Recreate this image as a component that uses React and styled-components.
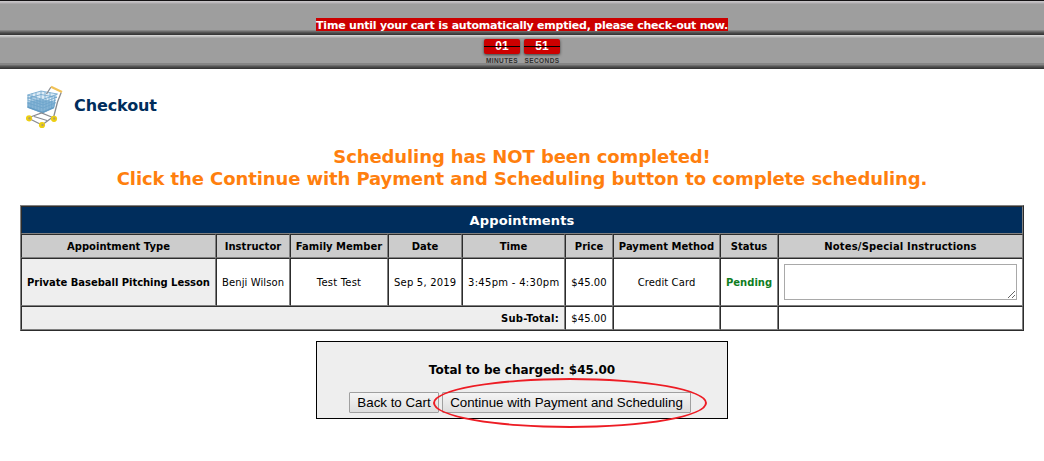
import React from "react";
import styled, { createGlobalStyle, css } from "styled-components";

const columns = [
  { title: "Appointment Type", width: 195 },
  { title: "Instructor", width: 74, spacing: 0.05 },
  { title: "Family Member", width: 98 },
  { title: "Date", width: 74 },
  { title: "Time", width: 103 },
  { title: "Price", width: 48 },
  { title: "Payment Method", width: 107 },
  { title: "Status", width: 58 },
  { title: "Notes/Special Instructions", width: 245, spacing: 0.16 },
];

const appointments = [
  {
    type: "Private Baseball Pitching Lesson",
    instructor: "Benji Wilson",
    member: "Test Test",
    date: "Sep 5, 2019",
    time: "3:45pm - 4:30pm",
    price: "$45.00",
    method: "Credit Card",
    status: "Pending",
  },
];

const CartIcon = () => (
  <svg width="38" height="44" viewBox="0 0 38 44" fill="none">
    {/* basket */}
    <path d="M1.500 10 L15 6 L31.500 9 L28 22.500 L16.500 27.500 L1.500 22 Z" fill="#dcebf6" />
    <path d="M1.500 17 L14 14 L30 17 L28 22.500 L16.500 28.500 L1.500 22.500 Z" fill="#86b5d6" />
    <path
      d="M1.500 10 L17 14.500 L31.500 9 M1.500 12.500 L17 17.500 L31 12 M1.500 15 L17 20 L30 15 M1.500 18 L17 23 L29 18 M1.500 10 L15 6 L31.500 9 M1.500 13.500 L15 9.500 L31 12.500"
      stroke="#6ca3ca"
      strokeWidth="0.8"
    />
    <path
      d="M2 10 V22 M5 11 V23.500 M8 12 V24.500 M11 13 V26 M14 14 V27 M17 14.500 V28 M20 13.500 V26.500 M23 12.500 V25 M26 11 L25.500 23.500 M29 10 L28 22.500 M6 8.500 V16 M10 7.500 V15 M15 6 V14 M19 7 V14 M24 7.500 V13"
      stroke="#6ca3ca"
      strokeWidth="0.8"
    />
    <path d="M1.500 22 L16.500 27.500 L28 22.500" stroke="#659dc5" strokeWidth="1.600" />
    {/* frame */}
    <path
      d="M20.500 9 L25 2 M35.200 7.500 L31.500 17 L27.500 32.500 M3 32.500 L15.500 28 L28 33 M3 33.500 L16 40 M16 40 L27.500 31.500 M8 31.500 L21 35.500"
      stroke="#888b91"
      strokeWidth="1.300"
    />
    <path d="M25 1.800 L36 7" stroke="#f1c257" strokeWidth="2.200" />
    <g fill="#edcf12">
      <circle cx="3" cy="33.300" r="3.100" />
      <circle cx="16" cy="40" r="3.100" />
      <circle cx="28" cy="33.800" r="3.100" />
    </g>
    <g fill="#b3a264">
      <circle cx="3.500" cy="33.300" r="1.200" />
      <circle cx="16.500" cy="40" r="1.200" />
      <circle cx="28.300" cy="33.500" r="1.200" />
    </g>
  </svg>
);

const App = () => {
  return (
    <Page>
      <GlobalStyle />
      <TopBar>
        <Warning>
          Time until your cart is automatically emptied, please check-out now.
        </Warning>
      </TopBar>
      <TimerBar>
        <Timer value="01" label="MINUTES" />
        <Timer value="51" label="SECONDS" />
      </TimerBar>
      <TitleRow>
        <CartIcon />
        <Title>Checkout</Title>
      </TitleRow>
      <Notice>
        <NoticeLine>Scheduling has NOT been completed!</NoticeLine>
        <NoticeLine>
          Click the Continue with Payment and Scheduling button to complete scheduling.
        </NoticeLine>
      </Notice>
      <Table>
        <colgroup>
          {columns.map((column) => (
            <Column key={column.title} $width={column.width} />
          ))}
        </colgroup>
        <tbody>
          <Row $height={28}>
            <Caption colSpan={9}>Appointments</Caption>
          </Row>
          <Row $height={24}>
            {columns.map((column) => (
              <HeadCell key={column.title} $spacing={column.spacing}>
                {column.title}
              </HeadCell>
            ))}
          </Row>
          {appointments.map((item) => (
            <Row key={item.type} $height={48}>
              <Cell $bold $shaded $spacing={-0.04}>{item.type}</Cell>
              <Cell $spacing={0.1}>{item.instructor}</Cell>
              <Cell $spacing={0.2}>{item.member}</Cell>
              <Cell $spacing={0.2}>{item.date}</Cell>
              <Cell $spacing={0.3}>{item.time}</Cell>
              <Cell $spacing={0.1}>{item.price}</Cell>
              <Cell $spacing={0.1}>{item.method}</Cell>
              <Cell $bold $color="#0f7d1e">{item.status}</Cell>
              <Cell>
                <Notes />
              </Cell>
            </Row>
          ))}
          <Row $height={24}>
            <Cell colSpan={5} $bold $shaded $align="right" $spacing={0.25}>
              Sub-Total:
            </Cell>
            <Cell $spacing={0.1}>$45.00</Cell>
            <Cell />
            <Cell />
            <Cell />
          </Row>
        </tbody>
      </Table>
      <TotalBox>
        <Total>Total to be charged: $45.00</Total>
        <Buttons>
          <Button $width={90}>Back to Cart</Button>
          <Button $width={249}>Continue with Payment and Scheduling</Button>
        </Buttons>
        <Highlight />
      </TotalBox>
    </Page>
  );
};

const Timer = ({ value, label }) => (
  <TimerBlock>
    <Digits>{value}</Digits>
    <TimerLabel>{label}</TimerLabel>
  </TimerBlock>
);

export default App;

const GlobalStyle = createGlobalStyle`
  * {
    box-sizing: border-box;
  }

  body {
    margin: 0;
    background: #ffffff;
    color: #000000;
    font-family: Verdana, "DejaVu Sans", sans-serif;
  }
`;

const Page = styled.div`
  height: 461px;
  overflow: hidden;
`;

const TopBar = styled.div`
  display: flex;
  justify-content: center;
  height: 35px;
  padding-top: 18px;
  background: linear-gradient(
    #141214 0 1px, #c5c3c5 1px 2px, #bcb9bc 2px 3px, #aaa8aa 3px 4px,
    #9e9e9e 4px 30px, #858585 30px 31px, #6c6c6c 31px 32px,
    #555555 32px 33px, #444444 33px 34px, #373737 34px 35px
  );
`;

const Warning = styled.div`
  width: 412px;
  height: 13px;
  background: #cc0000;
  color: #ffffff;
  font-size: 11px;
  font-weight: bold;
  letter-spacing: -0.215px;
  line-height: 15px;
  text-align: center;
  white-space: nowrap;
`;

const TimerBar = styled.div`
  display: flex;
  justify-content: center;
  gap: 4px;
  height: 34px;
  padding-top: 4px;
  background: linear-gradient(
    #d2d2d2 0 1px, #c0c0c0 1px 2px, #adadad 2px 3px,
    #9e9e9e 3px 28px, #858585 28px 30px, #6c6c6c 30px 31px,
    #555555 31px 32px, #444444 32px 33px, #373737 33px 34px
  );
`;

const TimerBlock = styled.div`
  display: flex;
  flex-direction: column;
  align-items: center;
  width: 36px;
`;

const Digits = styled.div`
  position: relative;
  width: 36px;
  height: 15px;
  border-radius: 2px;
  background: #cc0000;
  box-shadow: 0 1px 3px rgba(0, 0, 0, 0.6);
  color: #ffffff;
  font: bold 12px/14px "Liberation Sans", Arial, sans-serif;
  text-align: center;

  &::after {
    content: "";
    position: absolute;
    top: 7px;
    left: 0;
    width: 100%;
    height: 1px;
    background: #000000;
  }
`;

const TimerLabel = styled.div`
  margin-top: 3px;
  color: #303030;
  font: bold 6.5px/8px "Liberation Sans", Arial, sans-serif;
  letter-spacing: 0.4px;
`;

const TitleRow = styled.div`
  display: flex;
  gap: 10px;
  height: 77px;
  padding: 16px 0 0 26px;
`;

const Title = styled.h1`
  margin: 11px 0 0;
  color: #002d5c;
  font-size: 16px;
  letter-spacing: -0.1px;
  line-height: 20px;
`;

const Notice = styled.div`
  height: 59px;
  color: #ff7f0e;
  font-size: 18px;
  font-weight: bold;
  letter-spacing: -0.1px;
  line-height: 22px;
  text-align: center;
  white-space: nowrap;
`;

const NoticeLine = styled.div``;

const Table = styled.table`
  width: 1004px;
  margin-left: 20px;
  border: 1px solid;
  border-color: #808080 #2c2c2c #2c2c2c #808080;
  border-spacing: 0;
  table-layout: fixed;
  font-size: 10px;
`;

const Column = styled.col`
  width: ${({ $width }) => $width}px;
`;

const Row = styled.tr`
  height: ${({ $height }) => $height}px;
`;

const cellBorder = css`
  border: 1px solid;
  border-color: #2c2c2c #808080 #808080 #2c2c2c;
`;

const Cell = styled.td`
  ${cellBorder}
  padding: 1px 5px 0;
  background: ${({ $shaded }) => ($shaded ? "#eeeeee" : "#ffffff")};
  color: ${({ $color }) => $color || "#000000"};
  font-weight: ${({ $bold }) => ($bold ? "bold" : "normal")};
  letter-spacing: ${({ $spacing }) => $spacing || 0}px;
  line-height: 15px;
  text-align: ${({ $align }) => $align || "center"};
  white-space: nowrap;
`;

const HeadCell = styled.th`
  ${cellBorder}
  padding: 1px 0 0;
  background: #cccccc;
  letter-spacing: ${({ $spacing }) => $spacing || 0}px;
  line-height: 15px;
  white-space: nowrap;
`;

const Caption = styled.th`
  ${cellBorder}
  padding: 2px 0 0;
  background: #002d5c;
  color: #ffffff;
  font-size: 13px;
  letter-spacing: 0.15px;
  line-height: 18px;
`;

const Notes = styled.textarea`
  display: block;
  width: 233px;
  height: 36px;
  margin: -1px 0 0;
  border: 1px solid #a9a9a9;
  border-radius: 0;
  background: #ffffff;
`;

const TotalBox = styled.div`
  position: relative;
  width: 412px;
  height: 78px;
  margin: 10px 0 0 316px;
  border: 1px solid #000000;
  background: #eeeeee;
  text-align: center;
`;

const Total = styled.div`
  padding-top: 19px;
  font-size: 12px;
  font-weight: bold;
  line-height: 18px;
`;

const Buttons = styled.div`
  display: flex;
  gap: 3px;
  margin: 13px 0 0 32px;
`;

const Button = styled.button`
  width: ${({ $width }) => $width}px;
  height: 21px;
  padding: 0;
  border: 1px solid #a0a0a0;
  border-radius: 1px;
  background: linear-gradient(#f5f5f5, #dddddd);
  color: #000000;
  font: 13.33px/18px "Liberation Sans", Arial, sans-serif;
  white-space: nowrap;
`;

const Highlight = styled.div`
  position: absolute;
  top: 36px;
  left: 116px;
  width: 274px;
  height: 50px;
  border: 2px solid #ed1c24;
  border-radius: 50%;
  pointer-events: none;
`;
